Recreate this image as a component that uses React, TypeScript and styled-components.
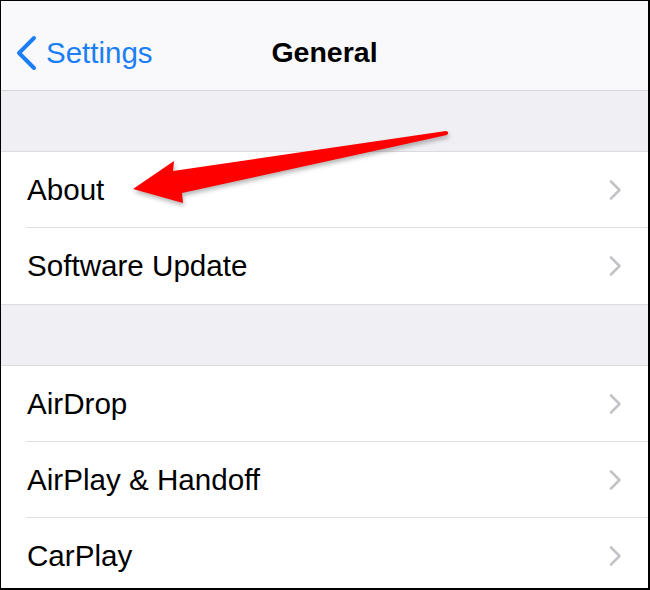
import React from "react";
import styled, { createGlobalStyle } from "styled-components";

const Global = createGlobalStyle`
  html, body { margin: 0; padding: 0; background: #ffffff; }
  body { font-family: "Liberation Sans", Arial, sans-serif; }
`;

const Frame = styled.div`
  position: relative;
  width: 650px;
  height: 590px;
  box-sizing: border-box;
  border-style: solid;
  border-color: #000;
  border-width: 1px 2px 2px 1px;
  overflow: hidden;
  background: #efeff4;
  display: flex;
  flex-direction: column;
`;

const NavBar = styled.header`
  flex: none;
  height: 90px;
  box-sizing: border-box;
  padding: 14px 14px 0 14px;
  background: #f9f9fb;
  border-bottom: 1px solid #d6d6da;
  display: grid;
  grid-template-columns: 1fr auto 1fr;
  align-items: center;
`;

const BackButton = styled.div`
  display: flex;
  align-items: center;
  gap: 9px;
  color: #1b7ef4;
  font-size: 29.5px;
`;

const Title = styled.h1`
  margin: 0;
  font-size: 28.5px;
  font-weight: 700;
  color: #000;
`;

const Spacer = styled.div`
  flex: none;
  height: 60px;
  background: #efeff4;
`;

const Group = styled.section`
  flex: none;
  background: #fff;
  border-top: 1px solid #dcdce0;
  border-bottom: 1px solid #dcdce0;
`;

const Row = styled.div`
  height: 76px;
  padding-left: 25px;
  box-sizing: border-box;
  display: flex;
`;

const RowBody = styled.div<{ $sep: boolean }>`
  flex: 1;
  display: flex;
  align-items: center;
  justify-content: space-between;
  padding: 1px 26px 0 1px;
  border-bottom: ${(p) => (p.$sep ? "1px solid #e0e0e4" : "1px solid transparent")};
`;

const Label = styled.span`
  font-size: 29.6px;
  color: #000;
`;

const ArrowLayer = styled.svg`
  position: absolute;
  top: -1px;
  left: -1px;
  width: 650px;
  height: 590px;
  pointer-events: none;
  filter: drop-shadow(1px 3px 2px rgba(0, 0, 0, 0.28));
`;

const Chevron = () => (
  <svg width="14" height="22" viewBox="0 0 14 22">
    <path d="M3 2.5 L11.5 11 L3 19.5" fill="none" stroke="#c4c4c8" strokeWidth="2.6" strokeLinecap="round" strokeLinejoin="round" />
  </svg>
);

const groups = [
  ["About", "Software Update"],
  ["AirDrop", "AirPlay & Handoff", "CarPlay"],
];

export default function App() {
  return (
    <>
      <Global />
      <Frame>
        <NavBar>
          <BackButton>
            <svg width="22" height="36" viewBox="0 0 22 36">
              <path d="M19 3 L4 18 L19 33" fill="none" stroke="#1b7ef4" strokeWidth="4" strokeLinecap="round" strokeLinejoin="round" />
            </svg>
            <span>Settings</span>
          </BackButton>
          <Title>General</Title>
          <div />
        </NavBar>
        {groups.map((items, gi) => (
          <React.Fragment key={gi}>
            <Spacer />
            <Group>
              {items.map((label, i) => (
                <Row key={label}>
                  <RowBody $sep={i < items.length - 1}>
                    <Label>{label}</Label>
                    <Chevron />
                  </RowBody>
                </Row>
              ))}
            </Group>
          </React.Fragment>
        ))}
        <ArrowLayer viewBox="0 0 650 590">
          <path
            d="M133 189 L174 161 L173 171 L446 131 Q450 132 447 135 L182 193 L183 203 Z"
            fill="#fe0000"
          />
        </ArrowLayer>
      </Frame>
    </>
  );
}
